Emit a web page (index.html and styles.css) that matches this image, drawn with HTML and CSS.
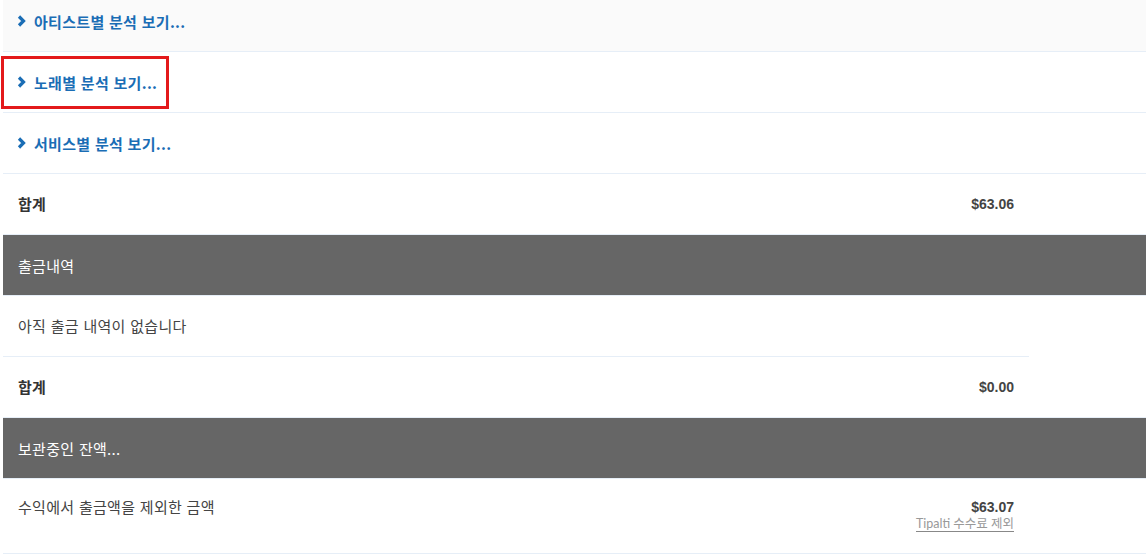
FILE: index.html
```html
<!DOCTYPE html>
<html lang="ko">

<head>
    <meta charset="UTF-8">
    <meta name="viewport" content="width=device-width, initial-scale=1.0">
    <title>수익 보고서</title>
    <link rel="stylesheet" href="styles.css">
</head>

<body>
    <div class="report">
        <div class="row breakdown first">
            <a class="toggle" href="#"><svg class="chevron" viewBox="0 0 9 12"><polyline points="2,1.5 6.5,6 2,10.5" /></svg>아티스트별 분석 보기...</a>
        </div>
        <div class="row breakdown">
            <a class="toggle" href="#"><svg class="chevron" viewBox="0 0 9 12"><polyline points="2,1.5 6.5,6 2,10.5" /></svg>노래별 분석 보기...</a>
            <div class="highlight"></div>
        </div>
        <div class="row breakdown">
            <a class="toggle" href="#"><svg class="chevron" viewBox="0 0 9 12"><polyline points="2,1.5 6.5,6 2,10.5" /></svg>서비스별 분석 보기...</a>
        </div>
        <div class="row">
            <div class="cells">
                <span class="label strong">합계</span>
                <span class="amount">$63.06</span>
            </div>
        </div>

        <div class="row section-head">출금내역</div>
        <div class="row plain">
            <div class="cells lined">
                <span class="label">아직 출금 내역이 없습니다</span>
            </div>
        </div>
        <div class="row">
            <div class="cells">
                <span class="label strong">합계</span>
                <span class="amount">$0.00</span>
            </div>
        </div>

        <div class="row section-head">보관중인 잔액...</div>
        <div class="row tall">
            <div class="cells top">
                <span class="label">수익에서 출금액을 제외한 금액</span>
                <div class="amount-block">
                    <span class="amount">$63.07</span>
                    <a class="fee-note" href="#">Tipalti 수수료 제외</a>
                </div>
            </div>
        </div>
    </div>
</body>

</html>
```

FILE: styles.css
```css
body {
    font-family: "Noto Sans CJK KR", "Noto Sans", sans-serif;
    font-size: 15px;
    letter-spacing: 0.3px;
    background-color: #ffffff;
    color: #444;
    margin: 0;
    padding: 0;
}

.report {
    margin-top: -9px;
    padding-left: 3px;
}

.row {
    position: relative;
    height: 60px;
    display: flex;
    align-items: center;
    border-bottom: 1px solid #e6eef7;
}

.first {
    background-color: #fafafa;
}

.toggle {
    display: flex;
    align-items: center;
    padding-left: 14px;
    font-weight: bold;
    color: #1a6db5;
    text-decoration: none;
}

.chevron {
    width: 9px;
    height: 12px;
    margin-right: 8px;
    fill: none;
    stroke: #1a6db5;
    stroke-width: 3.2;
}

.highlight {
    position: absolute;
    left: -2px;
    top: 4px;
    width: 162px;
    height: 47px;
    border: 3px solid #e3191b;
}

.cells {
    width: 996px;
    display: flex;
    justify-content: space-between;
    align-items: center;
    padding: 0 15px;
}

.label.strong {
    font-weight: bold;
    color: #333;
}

.amount {
    font-family: "Liberation Sans", Arial, sans-serif;
    font-size: 14px;
    font-weight: bold;
    letter-spacing: 0;
    color: #444;
}

.section-head {
    background-color: #666666;
    color: #ffffff;
    padding-left: 15px;
}

.plain {
    height: 61px;
    border-bottom: none;
    align-items: flex-start;
}

.cells.lined {
    height: 60px;
    border-bottom: 1px solid #e6eef7;
}

.tall {
    height: 74px;
    align-items: flex-start;
}

.cells.top {
    align-items: flex-start;
    padding-top: 19px;
}

.amount-block {
    display: flex;
    flex-direction: column;
    align-items: flex-end;
    line-height: 18px;
}

.label {
    line-height: 18px;
}

.fee-note {
    font-family: Lato, "Noto Sans CJK KR", sans-serif;
    font-size: 12.5px;
    line-height: 15px;
    letter-spacing: 0;
    color: #999;
    text-decoration: none;
    border-bottom: 1px solid #888;
}
```
